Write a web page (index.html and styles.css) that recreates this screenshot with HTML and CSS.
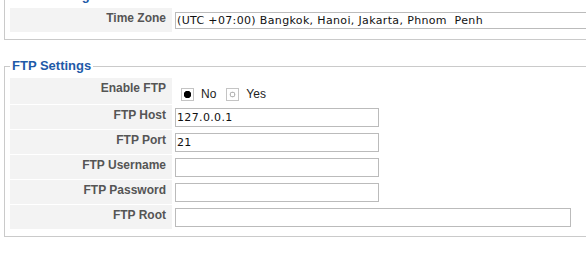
FILE: index.html
```html
<!DOCTYPE html>
<html lang="en">
<head>
    <meta charset="UTF-8">
    <meta name="viewport" content="width=device-width, initial-scale=1.0">
    <title>Settings</title>
    <link rel="stylesheet" href="styles.css">
</head>
<body>
    <div class="page">
        <fieldset class="group group-first">
            <legend>Time Settings</legend>
            <table class="form">
                <tr>
                    <th>Time Zone</th>
                    <td>
                        <select class="zone">
                            <option>(UTC +07:00) Bangkok, Hanoi, Jakarta, Phnom&nbsp; Penh</option>
                        </select>
                    </td>
                </tr>
            </table>
        </fieldset>

        <fieldset class="group">
            <legend>FTP Settings</legend>
            <table class="form">
                <tr class="row-tall">
                    <th>Enable FTP</th>
                    <td class="radios">
                        <div class="opts">
                            <label class="opt"><input type="radio" name="ftp" checked>No</label>
                            <label class="opt"><input type="radio" name="ftp">Yes</label>
                        </div>
                    </td>
                </tr>
                <tr>
                    <th>FTP Host</th>
                    <td><input type="text" class="text" value="127.0.0.1"></td>
                </tr>
                <tr>
                    <th>FTP Port</th>
                    <td><input type="text" class="text" value="21"></td>
                </tr>
                <tr>
                    <th>FTP Username</th>
                    <td><input type="text" class="text"></td>
                </tr>
                <tr>
                    <th>FTP Password</th>
                    <td><input type="password" class="text"></td>
                </tr>
                <tr>
                    <th>FTP Root</th>
                    <td><input type="text" class="text wide"></td>
                </tr>
            </table>
        </fieldset>
    </div>
</body>
</html>
```

FILE: styles.css
```css
html, body {
    margin: 0;
    overflow: hidden;
    background: #fff;
}
body {
    font-family: "Liberation Sans", Arial, sans-serif;
    font-size: 12px;
    color: #222;
}
.page {
    width: 640px;
    padding-left: 4px;
}
.group {
    margin: 0 0 18px;
    padding: 4px 0 6px 5px;
    border: 1px solid #cacaca;
}
.group-first {
    margin-top: -12px;
}
legend {
    padding: 0 2px;
    font-size: 13px;
    line-height: 16px;
    font-weight: bold;
    color: #1e5aa8;
}
.form {
    border-collapse: separate;
    border-spacing: 0;
}
.form tr {
    height: 25px;
}
.form tr.row-tall {
    height: 27px;
}
.form th,
.form td {
    border-bottom: 1px solid #fff;
}
.form th {
    width: 156px;
    padding: 3px 6px 0 0;
    background: #f3f3f3;
    color: #555;
    font-size: 12px;
    text-align: right;
    vertical-align: top;
    white-space: nowrap;
}
.form td {
    padding: 0 0 0 3px;
    vertical-align: middle;
}
.zone,
.text {
    box-sizing: border-box;
    margin: 0;
    border: 1px solid #bbb;
    border-radius: 0;
    background: #fff;
    color: #111;
    font-family: "DejaVu Sans", sans-serif;
    font-size: 11px;
    letter-spacing: 0.35px;
    vertical-align: middle;
}
.zone {
    -webkit-appearance: none;
    appearance: none;
    width: 440px;
    height: 17px;
    padding: 0 1px;
    line-height: 15px;
}
.text {
    width: 204px;
    height: 19px;
    padding: 0 1px;
    outline: none;
}
.text.wide {
    width: 396px;
}
.form td.radios {
    vertical-align: top;
    padding-top: 10px;
}
.opts {
    display: flex;
    align-items: center;
}
.opt {
    display: flex;
    align-items: center;
    color: #222;
    font-size: 12px;
    line-height: 13px;
}
.opt input {
    -webkit-appearance: none;
    appearance: none;
    width: 13px;
    height: 13px;
    margin: 0 7px 0 6px;
    border: 1px solid #c4c4c4;
    background: #fff radial-gradient(circle, transparent 1.5px, #b8b8b8 2px, #b8b8b8 2.6px, transparent 3.2px);
}
.opt input:checked {
    background: #fff radial-gradient(circle, #000 3.4px, transparent 4px);
}
.opt + .opt input {
    margin-left: 10px;
}
```
